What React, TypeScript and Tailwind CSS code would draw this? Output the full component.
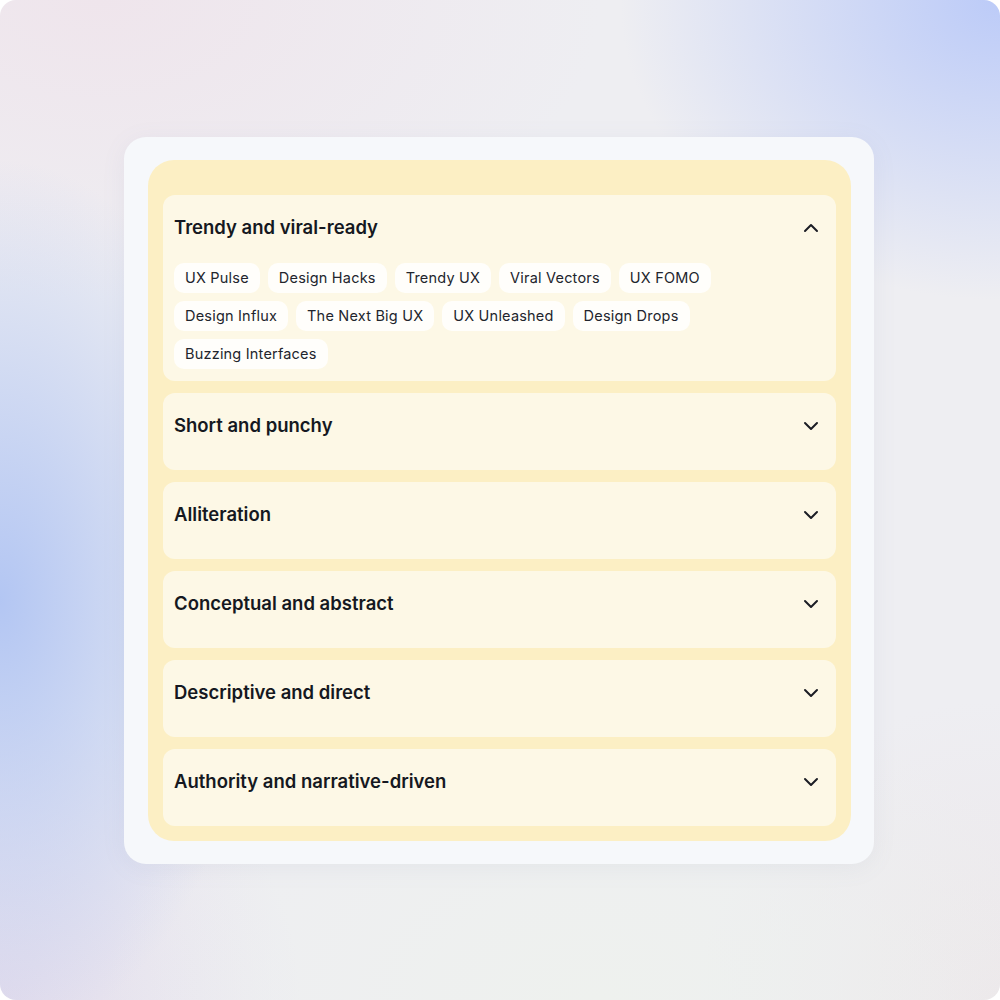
import React, { useState } from 'react';
import { ChevronDown, ChevronUp } from 'lucide-react';

interface Section {
  title: string;
  names: string[];
}

const sections: Section[] = [
  {
    title: 'Trendy and viral-ready',
    names: [
      'UX Pulse',
      'Design Hacks',
      'Trendy UX',
      'Viral Vectors',
      'UX FOMO',
      'Design Influx',
      'The Next Big UX',
      'UX Unleashed',
      'Design Drops',
      'Buzzing Interfaces',
    ],
  },
  { title: 'Short and punchy', names: [] },
  { title: 'Alliteration', names: [] },
  { title: 'Conceptual and abstract', names: [] },
  { title: 'Descriptive and direct', names: [] },
  { title: 'Authority and narrative-driven', names: [] },
];

const AccordionItem: React.FC<{ section: Section; open: boolean; onToggle: () => void }> = ({
  section,
  open,
  onToggle,
}) => {
  return (
    <div
      className={`rounded-[12px] bg-[#fdf8e6] pl-[11px] pr-[13px] pt-[18px] ${open ? 'pb-[12px]' : 'pb-[29px]'}`}
    >
      <button
        onClick={onToggle}
        className="flex h-[30px] w-full items-center justify-between text-left cursor-pointer"
      >
        <span className="text-[18.5px] font-semibold text-[#151821]">{section.title}</span>
        {open ? (
          <ChevronUp size={24} strokeWidth={2} className="text-[#1b1d24]" />
        ) : (
          <ChevronDown size={24} strokeWidth={2} className="text-[#1b1d24]" />
        )}
      </button>

      {/* name chips */}
      {open && (
        <div className="mt-[20px] flex flex-wrap gap-2 pr-[100px]">
          {section.names.map((n) => (
            <span
              key={n}
              className="flex h-[30px] items-center rounded-[10px] bg-[#fffefb] px-[11px] text-[14.5px] tracking-[0.2px] text-[#22252d]"
            >
              {n}
            </span>
          ))}
        </div>
      )}
    </div>
  );
};

export default function App() {
  const [openIdx, setOpenIdx] = useState<number>(0);

  return (
    <div className="h-[1000px] w-[1000px] bg-white" style={{ fontFamily: 'Inter, "Noto Sans", sans-serif' }}>
      <div className="flex h-full w-full items-center justify-center rounded-[16px] bg-[#eeeef2] bg-[radial-gradient(ellipse_260px_440px_at_0%_60%,#b3c6f3_0%,rgba(179,198,243,0)_100%),radial-gradient(ellipse_380px_300px_at_100%_0%,#bccbf8_0%,rgba(188,203,248,0)_100%),radial-gradient(ellipse_500px_300px_at_10%_0%,#efe5ec_0%,rgba(239,229,236,0)_100%),radial-gradient(ellipse_500px_320px_at_60%_100%,#eef1ee_0%,rgba(238,241,238,0)_100%),radial-gradient(ellipse_300px_300px_at_0%_100%,#e2dcec_0%,rgba(226,220,236,0)_100%),radial-gradient(ellipse_300px_300px_at_100%_100%,#ece7ea_0%,rgba(236,231,234,0)_100%)]">
        <div className="mr-[2px] w-[750px] rounded-[22px] bg-[#f6f8fb] pb-[23px] pl-[24px] pr-[23px] pt-[23px] shadow-[0_4px_24px_rgba(120,130,170,0.08)]">
          <div className="flex flex-col gap-3 rounded-[26px] bg-[#fcefc4] px-[15px] pb-[15px] pt-[35px]">
            {sections.map((s, i) => (
              <AccordionItem
                key={s.title}
                section={s}
                open={openIdx === i}
                onToggle={() => setOpenIdx(openIdx === i ? -1 : i)}
              />
            ))}
          </div>
        </div>
      </div>
    </div>
  );
}
